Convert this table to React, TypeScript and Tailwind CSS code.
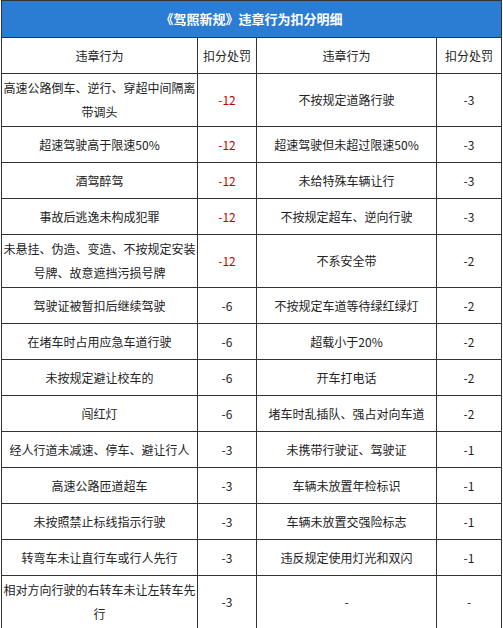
import React from "react";

type Row = { a: string; b: string; red: boolean; c: string; d: string; tall?: boolean };

const rows: Row[] = [
  { a: "高速公路倒车、逆行、穿超中间隔离带调头", b: "-12", red: true, c: "不按规定道路行驶", d: "-3", tall: true },
  { a: "超速驾驶高于限速50%", b: "-12", red: true, c: "超速驾驶但未超过限速50%", d: "-3" },
  { a: "酒驾醉驾", b: "-12", red: true, c: "未给特殊车辆让行", d: "-3" },
  { a: "事故后逃逸未构成犯罪", b: "-12", red: true, c: "不按规定超车、逆向行驶", d: "-3" },
  { a: "未悬挂、伪造、变造、不按规定安装号牌、故意遮挡污损号牌", b: "-12", red: true, c: "不系安全带", d: "-2", tall: true },
  { a: "驾驶证被暂扣后继续驾驶", b: "-6", red: false, c: "不按规定车道等待绿红绿灯", d: "-2" },
  { a: "在堵车时占用应急车道行驶", b: "-6", red: false, c: "超载小于20%", d: "-2" },
  { a: "未按规定避让校车的", b: "-6", red: false, c: "开车打电话", d: "-2" },
  { a: "闯红灯", b: "-6", red: false, c: "堵车时乱插队、强占对向车道", d: "-2" },
  { a: "经人行道未减速、停车、避让行人", b: "-3", red: false, c: "未携带行驶证、驾驶证", d: "-1" },
  { a: "高速公路匝道超车", b: "-3", red: false, c: "车辆未放置年检标识", d: "-1" },
  { a: "未按照禁止标线指示行驶", b: "-3", red: false, c: "车辆未放置交强险标志", d: "-1" },
  { a: "转弯车未让直行车或行人先行", b: "-3", red: false, c: "违反规定使用灯光和双闪", d: "-1" },
  { a: "相对方向行驶的右转车未让左转车先行", b: "-3", red: false, c: "-", d: "-", tall: true },
];

const font = { fontFamily: '"Noto Sans CJK SC", "Liberation Sans", sans-serif' };

function Cell({ w, children, red }: { w: string; children: React.ReactNode; red?: boolean }) {
  return (
    <div
      className={`${w} shrink-0 flex items-center justify-center text-center border-r border-[#333] text-[12px] leading-[24px] ${
        red ? "text-[#c00000]" : "text-[#222]"
      }`}
    >
      {children}
    </div>
  );
}

export default function App() {
  return (
    <div className="bg-white min-h-[628px] pl-[1px]" style={font}>
      <div className="w-[501px] border-t border-l border-[#333]">
        <div className="h-[37px] bg-[#2b7cd3] border-r border-b border-[#333] flex items-center justify-center text-white font-bold text-[13px]">
          《驾照新规》违章行为扣分明细
        </div>
        <div className="flex h-[36px] border-b border-[#333]">
          <Cell w="w-[196px]">违章行为</Cell>
          <Cell w="w-[59px]">扣分处罚</Cell>
          <Cell w="w-[180px]">违章行为</Cell>
          <Cell w="w-[65px]">扣分处罚</Cell>
        </div>
        {rows.map((r, i) => (
          <div
            key={i}
            className={`flex border-b border-[#333] ${r.tall ? "h-[53px]" : "h-[36px]"}`}
          >
            <Cell w="w-[196px]">{r.a}</Cell>
            <Cell w="w-[59px]" red={r.red}>
              {r.b}
            </Cell>
            <Cell w="w-[180px]">{r.c}</Cell>
            <Cell w="w-[65px]">{r.d}</Cell>
          </div>
        ))}
      </div>
    </div>
  );
}
